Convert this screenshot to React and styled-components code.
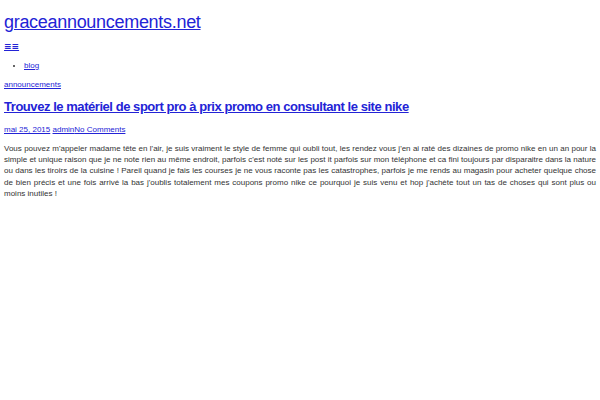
import React from 'react'
import styled, { createGlobalStyle } from 'styled-components';

const GlobalStyle = createGlobalStyle`
  html, body {
    margin: 0;
    padding: 0;
    background: #fff;
  }
  body {
    font-family: "Liberation Sans", Arial, sans-serif;
    color: #333;
  }
  a {
    color: #2323d6;
  }
`;

const post = {
  category: 'announcements',
  title: 'Trouvez le matériel de sport pro à prix promo en consultant le site nike',
  date: 'mai 25, 2015',
  author: 'admin',
  comments: 'No Comments',
  body: "Vous pouvez m'appeler madame tête en l'air, je suis vraiment le style de femme qui oubli tout, les rendez vous j'en ai raté des dizaines de promo nike en un an pour la simple et unique raison que je ne note rien au même endroit, parfois c'est noté sur les post it parfois sur mon téléphone et ca fini toujours par disparaitre dans la nature ou dans les tiroirs de la cuisine ! Pareil quand je fais les courses je ne vous raconte pas les catastrophes, parfois je me rends au magasin pour acheter quelque chose de bien précis et une fois arrivé la bas j'oublis totalement mes coupons promo nike ce pourquoi je suis venu et hop j'achète tout un tas de choses qui sont plus ou moins inutiles !",
};

const App = () => {
  return (
    <Page>
      <GlobalStyle />
      <Header>
        <SiteTitle><a href="#">graceannouncements.net</a></SiteTitle>
        <MenuToggle href="#">≡≡</MenuToggle>
        <NavList>
          <li><a href="#">blog</a></li>
        </NavList>
      </Header>
      <Article>
        <Category href="#">{post.category}</Category>
        <PostTitle><a href="#">{post.title}</a></PostTitle>
        <Meta>
          <a href="#">{post.date}</a> <a href="#">{post.author}</a><a href="#">{post.comments}</a>
        </Meta>
        <Body>{post.body}</Body>
      </Article>
    </Page>
  )
}

const Page = styled.div`
  padding: 0 4px;
  width: 592px;
`;

const Header = styled.header`
  display: flex;
  flex-direction: column;
  align-items: flex-start;
`;

const SiteTitle = styled.h1`
  margin: 11px 0 0;
  font-size: 18px;
  line-height: 22px;
  font-weight: normal;
  letter-spacing: -0.3px;
`;

const MenuToggle = styled.a`
  margin-top: 7px;
  font-size: 9px;
  line-height: 12px;
  font-weight: bold;
  font-family: "DejaVu Sans", sans-serif;
`;

const NavList = styled.ul`
  margin: 9px 0 0;
  padding-left: 20px;
  font-size: 8px;
  line-height: 10px;
  li {
    list-style: disc;
  }
`;

const Article = styled.article`
  display: flex;
  flex-direction: column;
  align-items: flex-start;
`;

const Category = styled.a`
  margin-top: 9px;
  font-size: 8px;
  line-height: 10px;
`;

const PostTitle = styled.h2`
  margin: 8px 0 0;
  font-size: 13px;
  line-height: 18px;
  font-weight: bold;
  letter-spacing: -0.45px;
`;

const Meta = styled.div`
  margin-top: 9px;
  font-size: 8px;
  line-height: 10px;
`;

const Body = styled.p`
  margin: 8px 0 0;
  font-size: 8px;
  line-height: 11.2px;
  text-align: justify;
  color: #333;
`;

export default App
